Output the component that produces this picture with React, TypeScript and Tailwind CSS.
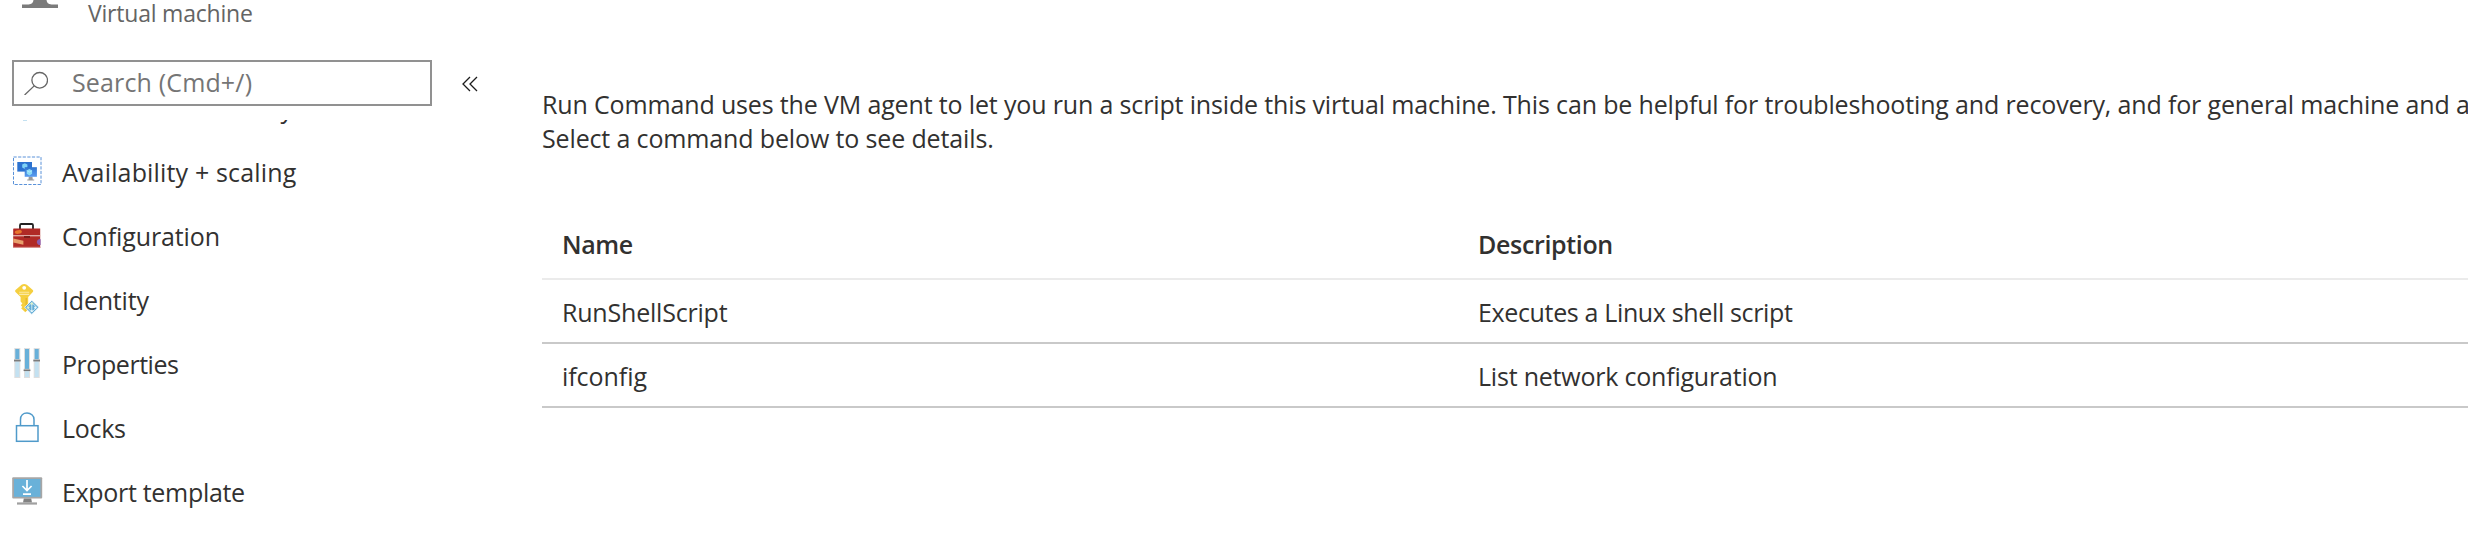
import type { ReactNode } from "react";

function AvailabilityIcon() {
  return (
    <svg className="size-8 shrink-0" viewBox="0 0 32 32" fill="none">
      <defs>
        <linearGradient id="screen" x1="0" y1="0" x2="0" y2="1">
          <stop offset="0" stopColor="#2f74cf" />
          <stop offset="1" stopColor="#5b9df0" />
        </linearGradient>
      </defs>
      <rect x="2.5" y="1" width="27.5" height="27.5" stroke="#5a92d9" strokeWidth="1" strokeDasharray="3.2 1.4" />
      <rect x="6.3" y="6" width="14.7" height="9.6" fill="#2c72d0" />
      <path d="M11.2 8.6l2.6-1.3 2.6 1.3v3l-2.6 1.4-2.6-1.4z" fill="#7fd2f5" />
      <path d="M17.8 20.5h3.6l.4 3h1.4v.9h-7v-.9h1.3z" fill="#9a9a9a" />
      <rect x="13.7" y="11.2" width="12.2" height="9.6" fill="url(#screen)" />
      <path d="M15.7 14.6l2.7-1.5 2.7 1.5v3.2l-2.7 1.6-2.7-1.6z" fill="#8adcf8" />
      <path d="M15.7 14.6l2.7 1.4 2.7-1.4" stroke="#c8f2fd" strokeWidth=".6" />
    </svg>
  );
}

function ConfigurationIcon() {
  return (
    <svg className="size-8 shrink-0" viewBox="0 0 32 32" fill="none">
      <path d="M9 9V5.2Q9 4 10.2 4h10.6Q22 4 22 5.2V9" stroke="#222" strokeWidth="1.8" />
      <path d="M2.6 8.6h26.6v18.8H2.2V9z" fill="#b02a26" />
      <path d="M2 26.8h27.6v1H2z" fill="#d98f8b" />
      <ellipse cx="7.3" cy="12" rx="3.6" ry="1.8" fill="#e8762d" transform="rotate(-8 7.3 12)" />
      <rect x="2" y="15.2" width="27.6" height="1.1" fill="#e9c7c3" />
      <rect x="13" y="16" width="6" height="2" fill="#7c1f1c" />
      <path d="M2.2 18.5l10.2 2.2v4L2.2 22.6z" fill="#e8a06c" />
      <path d="M29.6 19.2a3 3 0 1 0 0 5.8z" fill="#8a5bb0" />
    </svg>
  );
}

function IdentityIcon() {
  return (
    <svg className="size-8 shrink-0 overflow-visible" viewBox="0 0 32 32" fill="none">
      <path
        d="M10.6.8Q13.2-1 15.8.8l6 5.2q1 1 0 2L17.2 13v12.2l-2.9 3.1-4.2-4 1.3-1.4-1.6-1.7 1.6-1.7-1.8-1.9V13L4.5 8q-1-1 0-2z"
        fill="#f5cf3f"
      />
      <path d="M14.6 14h1.2v11.8l-1.2 1.1z" fill="#e3b52a" />
      <circle cx="13.2" cy="3.8" r="1.9" fill="#fff" />
      <path d="M8.2 8.2h10M8.2 10.4h10" stroke="#fbe9a4" strokeWidth="1.1" />
      <path d="M20.8 16.2l7.2 7.1-7.2 7.1-7.2-7.1z" fill="#63acd5" stroke="#fff" strokeWidth=".8" />
      <path d="M20.8 18.5l4.8 4.8-4.8 4.8-4.8-4.8zM20.8 18.5v9.6" stroke="#cdeaf6" strokeWidth="1" />
      <circle cx="20.8" cy="19.6" r="1.2" fill="#dff2c8" />
      <circle cx="17.3" cy="23.6" r="1.2" fill="#dff2c8" />
      <circle cx="24.3" cy="23.6" r="1.2" fill="#e8f6fb" />
      <circle cx="20.8" cy="27" r="1.1" fill="#e8f6fb" />
    </svg>
  );
}

function PropertiesIcon() {
  const sliders = [
    { x: 3.3, knob: 12.3 },
    { x: 13, knob: 22 },
    { x: 22.7, knob: 12.3 },
  ];
  return (
    <svg className="size-8 shrink-0" viewBox="0 0 32 32">
      {sliders.map(({ x, knob }) => (
        <g key={x}>
          <rect x={x} y="0" width="6" height="30" fill="#dedede" />
          <rect x={x + 1} y="1" width="4" height={knob - 1} fill="#68b0d9" />
          <rect x={x + 1} y={knob} width="4" height={29 - knob} fill="#c3e1f1" />
          <rect x={x - 0.3} y={knob - 1.2} width="6.6" height="2.4" fill="#bdbdbd" />
          <rect x={x - 0.3} y={knob - 0.2} width="6.6" height="1.2" fill="#757575" />
        </g>
      ))}
    </svg>
  );
}

function LocksIcon() {
  return (
    <svg className="size-8 shrink-0" viewBox="0 0 32 32" fill="none" stroke="#4f9aca" strokeWidth="1.5">
      <rect x="5.5" y="13.7" width="21.5" height="15.6" />
      <path d="M9.5 13.7V7.4C9.5 3.6 12.2 1 16 1s7 2.6 7 6.4v6.3" />
    </svg>
  );
}

function ExportIcon() {
  return (
    <svg className="size-8 shrink-0" viewBox="0 0 32 32" fill="none">
      <rect x="1.2" y="1.2" width="30" height="21.4" rx="1" fill="#a6a6a6" />
      <rect x="3" y="3" width="26.4" height="17.8" fill="#69b1d9" />
      <path d="M12.8 22.6h7.4l.8 4h-9z" fill="#828282" />
      <rect x="6" y="26.4" width="20" height="2.2" fill="#a0a0a0" />
      <path d="M16 4v10.2M11.4 10l4.6 4.6 4.6-4.6M12 18.2h8" stroke="#fff" strokeWidth="1.7" />
    </svg>
  );
}

function NavItem({ icon, className = "", children }: { icon?: ReactNode; className?: string; children: ReactNode }) {
  return (
    <li className={`flex h-16 shrink-0 items-center gap-[19px] pl-[11px] leading-[64px] ${className}`}>
      {icon}
      <span>{children}</span>
    </li>
  );
}

function Sidebar() {
  return (
    <aside className="flex w-[542px] shrink-0 flex-col">
      <header className="flex h-[60px] items-start">
        <svg className="ml-5 h-3 w-10 shrink-0" viewBox="0 0 40 12" fill="#7b7b7b">
          <path d="M13.500 0h13c.3 2.700 1.700 4.300 5 4.500H38V8H2V4.500h6.500c3.300-.2 4.700-1.800 5-4.500z" />
        </svg>
        <p className="-mt-[3px] ml-7 text-[23px] leading-[32px] tracking-[-0.21px] text-[#646464]">Virtual machine</p>
      </header>
      <div className="flex h-[46px] items-center pl-3">
        <div className="flex h-[46px] w-[420px] items-center border-2 border-[#919191] pl-2.5 text-[#757575]">
          <svg className="size-6 shrink-0" viewBox="0 0 24 24" fill="none" stroke="#666" strokeWidth="1.3">
            <circle cx="15.7" cy="9.3" r="7.8" />
            <path d="M10.2 14.9L.6 24" />
          </svg>
          <span className="mb-0.5 ml-6 tracking-[0.15px]">Search (Cmd+/)</span>
        </div>
        <svg className="mt-px ml-[30px] h-4 w-4 shrink-0" viewBox="0 0 16 16" fill="none" stroke="#1c1c1c" strokeWidth="1.3">
          <path d="M8 1L1 8l7 7M15 1L8 8l7 7" />
        </svg>
      </div>
      <nav className="mt-3.5 h-[430px] overflow-hidden">
        <ul className="-mt-11 flex flex-col">
          <NavItem
            className="tracking-[-0.05px]"
            icon={
              <svg className="size-8 shrink-0" viewBox="0 0 32 32">
                <rect x="12" y="28" width="4" height="1" fill="#c3e1f1" />
              </svg>
            }
          >
            Continuous delivery
          </NavItem>
          <NavItem className="tracking-[0.16px]" icon={<AvailabilityIcon />}>Availability + scaling</NavItem>
          <NavItem className="tracking-[-0.12px]" icon={<ConfigurationIcon />}>Configuration</NavItem>
          <NavItem className="tracking-[-0.2px]" icon={<IdentityIcon />}>Identity</NavItem>
          <NavItem className="tracking-[-0.45px]" icon={<PropertiesIcon />}>Properties</NavItem>
          <NavItem className="tracking-[-0.3px]" icon={<LocksIcon />}>Locks</NavItem>
          <NavItem className="tracking-[-0.31px]" icon={<ExportIcon />}>Export template</NavItem>
        </ul>
      </nav>
    </aside>
  );
}

export default function App() {
  return (
    <div className="flex h-[550px] w-[2468px] overflow-hidden bg-white font-['Open_Sans',sans-serif] text-[25px] leading-[34px] text-[#323130]">
      <Sidebar />
      <main className="w-[1926px] shrink-0 overflow-hidden pt-[87px]">
        <div className="whitespace-nowrap">
          <p className="tracking-[-0.15px]">
            Run Command uses the VM agent to let you run a script inside this virtual machine. This can be helpful for
            troubleshooting and recovery, and for general machine and application diagnostics.
          </p>
          <p className="tracking-[-0.14px]">Select a command below to see details.</p>
        </div>
        <div className="mt-[57px]">
          <div className="grid h-[68px] grid-cols-[916px_1fr] items-center border-b-2 border-[#ebebeb] pb-0.5 pl-5 font-semibold">
            <span className="tracking-[-0.4px]">Name</span>
            <span className="tracking-[-0.34px]">Description</span>
          </div>
          <div className="grid h-16 grid-cols-[916px_1fr] items-center border-b-2 border-[#c9c9c9] pt-0.5 pl-5">
            <span className="tracking-[-0.2px]">RunShellScript</span>
            <span className="tracking-[-0.35px]">Executes a Linux shell script</span>
          </div>
          <div className="grid h-16 grid-cols-[916px_1fr] items-center border-b-2 border-[#c9c9c9] pt-0.5 pl-5">
            <span className="tracking-[-0.05px]">ifconfig</span>
            <span className="tracking-[-0.21px]">List network configuration</span>
          </div>
        </div>
      </main>
    </div>
  );
}
